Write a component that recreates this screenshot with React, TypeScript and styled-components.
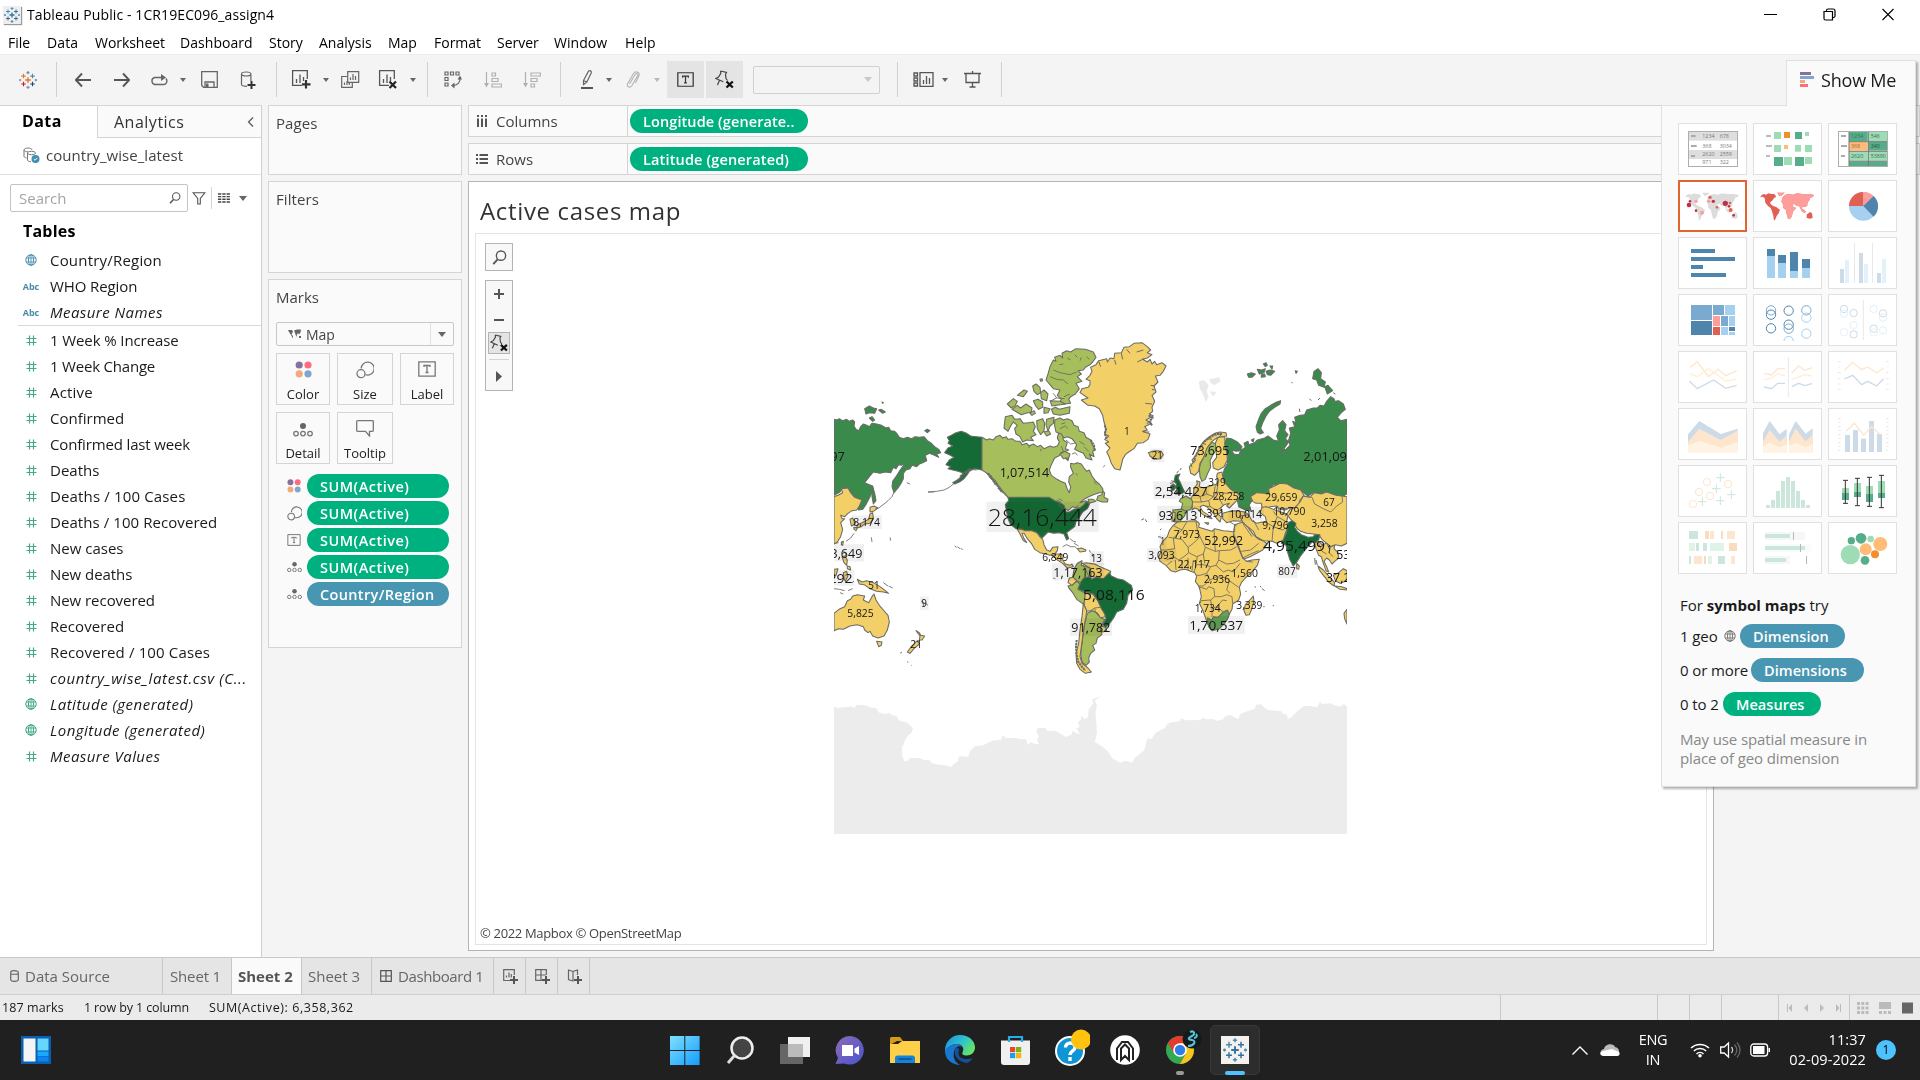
import React from "react";
import styled, { createGlobalStyle } from "styled-components";

const GlobalStyle = createGlobalStyle`
  * { box-sizing: border-box; }
  html, body { margin: 0; padding: 0; }
  body { width: 1920px; height: 1080px; overflow: hidden; background: #fff; }
  svg { display: block; flex: none; }
`;

const UI = `"Open Sans", "Noto Sans", sans-serif`;

const Screen = styled.div`
  position: relative;
  display: flex;
  flex-direction: column;
  width: 1920px;
  height: 1080px;
  background: #f4f4f4;
  font-family: ${UI};
  font-size: 15px;
  color: #1a1a1a;
  overflow: hidden;
  white-space: nowrap;
`;

/* ---------- title and menu ---------- */
const TitleBar = styled.header`
  display: flex;
  align-items: center;
  height: 29px;
  padding: 0 26px 0 3px;
  background: #fff;
`;
const AppBadge = styled.span`
  display: grid;
  place-items: center;
  width: 18px;
  height: 18px;
  background: #eee;
  box-shadow: 1px 1px 1px #999;
`;
const TitleText = styled.h1`
  flex: 1;
  margin: 0 0 0 6px;
  font-size: 14px;
  font-weight: 400;
  letter-spacing: 0.1px;
  color: #000;
`;
const WindowButtons = styled.div`
  display: flex;
  gap: 46px;
`;
const MenuBar = styled.nav`
  display: flex;
  align-items: center;
  height: 25px;
  padding-top: 1px;
  background: #fff;
  color: #000;
  font-size: 14px;
`;
const MenuItem = styled.span<{ $w: number; $s: number }>`
  width: ${(p) => p.$w}px;
  padding-left: 8px;
  letter-spacing: ${(p) => p.$s}px;
`;

/* ---------- toolbar ---------- */
const Toolbar = styled.div`
  display: flex;
  align-items: center;
  height: 51px;
  padding-bottom: 1px;
  border-top: 1px solid #ececec;
  background: #f4f4f4;
`;
const Tool = styled.span<{ $l: number; $w: number; $on?: boolean }>`
  display: flex;
  justify-content: center;
  align-items: center;
  margin-left: ${(p) => p.$l}px;
  width: ${(p) => p.$w}px;
  height: 37px;
  background: ${(p) => (p.$on ? "#e4e4e4" : "transparent")};
`;
const Divider = styled.span<{ $l: number }>`
  margin-left: ${(p) => p.$l}px;
  width: 1px;
  height: 35px;
  background: #d0d0d0;
`;
const Caret = styled.i<{ $c?: string; $l?: number; $size?: number }>`
  margin-left: ${(p) => p.$l ?? 0}px;
  border: ${(p) => p.$size ?? 3}px solid transparent;
  border-top: ${(p) => (p.$size ?? 3) + 1}px solid ${(p) => p.$c ?? "#666"};
  border-bottom: 0;
`;
const FitSelect = styled.span`
  display: flex;
  align-items: center;
  justify-content: flex-end;
  margin-left: 10px;
  padding-right: 7px;
  width: 127px;
  height: 28px;
  border: 1px solid #d0d0d0;
  border-radius: 2px;
`;

/* ---------- body ---------- */
const Body = styled.div`
  display: flex;
  height: 852px;
`;
const DataPane = styled.aside`
  width: 262px;
  border-top: 1px solid #d4d4d4;
  border-right: 1px solid #d0d0d0;
  background: #fff;
`;
const PaneTabs = styled.div`
  display: flex;
  height: 32px;
`;
const DataTab = styled.b`
  width: 97px;
  padding: 4px 0 0 22px;
  font-size: 16px;
  font-weight: 700;
  line-height: 22px;
  letter-spacing: 0.4px;
  color: #000;
`;
const AnalyticsTab = styled.span`
  display: flex;
  flex: 1;
  justify-content: space-between;
  align-items: center;
  padding: 1px 7px 0 16px;
  font-size: 16px;
  letter-spacing: 0.5px;
  border-left: 1px solid #d4d4d4;
  border-bottom: 1px solid #d4d4d4;
  background: #fafafa;
  color: #333;
`;
const SourceRow = styled.div`
  display: flex;
  align-items: center;
  gap: 6px;
  height: 37px;
  padding: 0 0 2px 23px;
  border-bottom: 1px solid #e0e0e0;
  color: #444;
  letter-spacing: 0.05px;
`;
const SearchRow = styled.div`
  display: flex;
  align-items: center;
  height: 46px;
  padding: 0 0 0 10px;
`;
const SearchBox = styled.div`
  display: flex;
  align-items: center;
  justify-content: space-between;
  width: 178px;
  height: 28px;
  margin-right: 4px;
  padding: 0 6px 1px 8px;
  border: 1px solid #c4c4c4;
  border-radius: 2px;
  color: #a5a5a5;
`;
const ThinLine = styled.span`
  width: 1px;
  height: 22px;
  margin: 0 6px 0 5px;
  background: #d4d4d4;
`;
const Tables = styled.h2`
  margin: 0;
  padding: 0 0 0 23px;
  height: 26px;
  font-size: 16px;
  line-height: 20px;
  font-weight: 700;
  letter-spacing: 0.2px;
  color: #000;
`;
const Field = styled.div<{ $i?: boolean; $s?: number }>`
  display: flex;
  align-items: center;
  height: 26px;
  font-style: ${(p) => (p.$i ? "italic" : "normal")};
  letter-spacing: ${(p) => p.$s ?? 0}px;
`;
const FieldIcon = styled.span`
  display: flex;
  justify-content: center;
  width: 26px;
  margin: 0 6px 0 18px;
  font: 700 9px ${UI};
  letter-spacing: 0;
  color: #4a89a8;
`;
const FieldRule = styled.hr`
  height: 1px;
  margin: 0 0 1px 18px;
  border: 0;
  background: #d9d9d9;
`;

const Cards = styled.section`
  display: flex;
  flex-direction: column;
  gap: 6px;
  width: 206px;
  padding: 0 6px;
`;
const Card = styled.div<{ $h: number }>`
  height: ${(p) => p.$h}px;
  padding: 6px 7px;
  border: 1px solid #d4d4d4;
  background: #fafafa;
  color: #444;
`;
const CardTitle = styled.div<{ $s?: number }>`
  height: 23px;
  line-height: 22px;
  letter-spacing: ${(p) => p.$s ?? 0}px;
`;
const MarkSelect = styled.div`
  display: flex;
  align-items: center;
  width: 178px;
  height: 24px;
  margin: 13px 0 7px;
  padding-left: 11px;
  border: 1px solid #c8c8c8;
  border-radius: 2px;
  font-size: 14px;
  gap: 5px;
`;
const MarkArrow = styled.span`
  display: grid;
  place-items: center;
  width: 23px;
  height: 22px;
  margin-left: auto;
  border-left: 1px solid #e0e0e0;
`;
const MarkGrid = styled.div`
  display: grid;
  grid-template-columns: 54px 56px 54px;
  grid-auto-rows: 52px;
  gap: 7px;
  margin-bottom: 10px;
`;
const MarkButton = styled.div`
  display: flex;
  flex-direction: column;
  align-items: center;
  justify-content: space-between;
  padding: 7px 0 0;
  border: 1px solid #d4d4d4;
  font-size: 13px;
  line-height: 20px;
  color: #222;
`;
const PillRow = styled.div`
  display: flex;
  align-items: center;
  height: 24px;
  margin-bottom: 3px;
`;
const PillIcon = styled.span`
  display: flex;
  justify-content: center;
  width: 18px;
  margin: 0 4px 0 9px;
`;
const Pill = styled.span<{ $w: number; $blue?: boolean; $s?: number; $l?: number }>`
  width: ${(p) => p.$w}px;
  height: 24px;
  padding-left: ${(p) => p.$l ?? 13}px;
  border-radius: 12px;
  background: ${(p) => (p.$blue ? "#4996b2" : "#00b180")};
  color: #fff;
  font-weight: 600;
  font-size: 14.5px;
  line-height: 25px;
  letter-spacing: ${(p) => p.$s ?? 0}px;
`;

const Work = styled.main`
  flex: 1;
  display: flex;
  flex-direction: column;
`;
const Shelf = styled.div`
  display: flex;
  height: 32px;
  margin-bottom: 6px;
  border: 1px solid #d4d4d4;
  background: #fafafa;
  align-items: center;
`;
const ShelfName = styled.div`
  display: flex;
  align-items: center;
  gap: 8px;
  width: 159px;
  height: 30px;
  margin-right: 2px;
  padding-left: 7px;
  border-right: 1px solid #d4d4d4;
  color: #444;
`;
const Sheet = styled.div`
  width: 1246px;
  height: 770px;
  padding: 0 6px;
  border: 1px solid #b4b4b4;
  background: #fff;
`;
const SheetTitle = styled.h2`
  height: 51px;
  margin: 0;
  padding: 5px 0 0 5px;
  font-size: 24px;
  line-height: 48px;
  font-weight: 400;
  letter-spacing: 0.65px;
  color: #333;
`;
const Viz = styled.div`
  display: flex;
  flex-direction: column;
  position: relative;
  height: 712px;
  padding: 9px 9px 4px;
  border: 1px solid #e4e4e4;
`;
const MapControl = styled.div<{ $h: number }>`
  display: flex;
  flex-direction: column;
  align-items: center;
  width: 28px;
  height: ${(p) => p.$h}px;
  margin-bottom: 9px;
  border: 1px solid #b4b4b4;
  background: #f8f8f8;
`;
const MapCell = styled.span<{ $h: number; $on?: boolean }>`
  display: grid;
  place-items: center;
  width: 22px;
  height: ${(p) => p.$h}px;
  border: ${(p) => (p.$on ? "1px solid #b4b4b4" : "0")};
  background: ${(p) => (p.$on ? "#e4e4e4" : "transparent")};
`;
const ControlRule = styled.span`
  width: 20px;
  height: 1px;
  margin: 5px 0 5px;
  background: #d4d4d4;
`;
const MapCanvas = styled.div`
  position: absolute;
  left: 358px;
  top: 96px;
`;
const Credit = styled.div`
  margin-top: auto;
  margin-left: -5px;
  font-size: 13px;
  line-height: 14px;
  letter-spacing: -0.33px;
  color: #444;
`;

/* ---------- sheet tabs, status ---------- */
const SheetTabs = styled.div`
  display: flex;
  height: 37px;
  border-top: 1px solid #c8c8c8;
  background: #e5e5e5;
  color: #666;
`;
const SheetTab = styled.div<{ $w: number; $active?: boolean; $p?: number; $s?: number }>`
  display: flex;
  align-items: center;
  gap: 6px;
  width: ${(p) => p.$w}px;
  padding-left: ${(p) => p.$p ?? 7}px;
  border-right: 1px solid #c8c8c8;
  background: ${(p) => (p.$active ? "#fafafa" : "transparent")};
  font-weight: ${(p) => (p.$active ? 700 : 400)};
  color: ${(p) => (p.$active ? "#555" : "#666")};
  letter-spacing: ${(p) => p.$s ?? 0}px;
`;
const StatusBar = styled.div`
  display: flex;
  align-items: center;
  height: 26px;
  padding-left: 2px;
  border-top: 1px solid #cfcfcf;
  background: #ebebeb;
  font-size: 12.5px;
`;
const StatusText = styled.span<{ $w: number; $s?: number }>`
  width: ${(p) => p.$w}px;
  letter-spacing: ${(p) => p.$s ?? 0}px;
`;
const StatusCell = styled.span<{ $w: number }>`
  display: flex;
  align-items: center;
  justify-content: center;
  width: ${(p) => p.$w}px;
  height: 25px;
  border-left: 1px solid #c8c8c8;
`;

/* ---------- task bar ---------- */
const TaskBar = styled.footer`
  display: flex;
  align-items: center;
  height: 60px;
  padding-left: 21px;
  background: #202020;
  color: #fff;
`;
const Dock = styled.div`
  display: flex;
  margin-left: 609px;
`;
const DockSlot = styled.div<{ $on?: boolean }>`
  display: grid;
  place-items: center;
  position: relative;
  width: 50px;
  height: 50px;
  margin-right: 5px;
  border-radius: 5px;
  border: 1px solid ${(p) => (p.$on ? "#383838" : "transparent")};
  background: ${(p) => (p.$on ? "#2d2d2d" : "transparent")};
`;
const Badged = styled.span<{ $m: string }>`
  margin: ${(p) => p.$m};
`;
const RunMark = styled.i<{ $w: number; $c: string }>`
  position: absolute;
  bottom: -1px;
  width: ${(p) => p.$w}px;
  height: 4px;
  border-radius: 2px;
  background: ${(p) => p.$c};
`;
const Tray = styled.div`
  display: flex;
  align-items: center;
  flex: 1;
  justify-content: flex-end;
  padding-right: 24px;
  font-size: 14.5px;
  line-height: 20px;
`;
const TwoLines = styled.div<{ $a: string; $w: number; $m: string; $s: number }>`
  width: ${(p) => p.$w}px;
  margin: ${(p) => p.$m};
  text-align: ${(p) => p.$a};
  letter-spacing: ${(p) => p.$s}px;
`;
const Bubble = styled.span`
  width: 20px;
  height: 20px;
  border-radius: 10px;
  background: #4cc2ff;
  color: #000;
  font-size: 12px;
  text-align: center;
`;

/* ---------- show me ---------- */
const ShowMe = styled.aside`
  position: absolute;
  left: 1661px;
  top: 60px;
  width: 255px;
  height: 727px;
  display: flex;
  flex-direction: column;
  align-items: flex-end;
  filter: drop-shadow(2px 2px 1px rgba(0, 0, 0, 0.3));
`;
const ShowTab = styled.div`
  display: flex;
  align-items: center;
  gap: 6px;
  width: 130px;
  height: 46px;
  margin-bottom: -1px;
  padding: 0 0 8px 13px;
  border: 1px solid #e0e0e0;
  border-bottom: 0;
  background: #fafafa;
  z-index: 1;
  font-size: 18px;
  letter-spacing: -0.2px;
`;
const ShowPanel = styled.div`
  width: 255px;
  height: 682px;
  padding: 17px 16px;
  border: 1px solid #e0e0e0;
  background: #fafafa;
`;
const Thumbs = styled.div`
  display: grid;
  grid-template-columns: repeat(3, 69px);
  grid-auto-rows: 52px;
  gap: 5px 6px;
`;
const Thumb = styled.div<{ $on?: boolean }>`
  background: #fff;
  outline: ${(p) => (p.$on ? "2px solid #e0662e" : "1px solid #e0e0e0")};
  outline-offset: ${(p) => (p.$on ? -2 : -1)}px;
`;
const Hint = styled.div<{ $t: number }>`
  display: flex;
  align-items: center;
  height: 24px;
  margin: ${(p) => p.$t}px 0 0 2px;
  gap: 4px;
`;
const HintLead = styled.span<{ $w: number }>`
  width: ${(p) => p.$w}px;
  letter-spacing: -0.1px;
`;
const HintNote = styled.p`
  margin: 14px 0 0 2px;
  line-height: 19px;
  color: #888;
  letter-spacing: -0.12px;
`;

/* ---------- icons ---------- */
type G = { c?: string; s?: number };
const Svg = ({ w, h, children, box }: { w: number; h: number; box?: string; children: React.ReactNode }) => (
  <svg width={w} height={h} viewBox={box ?? `0 0 ${w} ${h}`} fill="none">
    {children}
  </svg>
);
const plus = (x: number, y: number, r: number) => `M${x - r} ${y}h${2 * r}M${x} ${y - r}v${2 * r}`;
const TableauMark = ({ s, mono }: { s: number; mono?: boolean }) => (
  <Svg w={s} h={s} box="0 0 32 32">
    <g strokeWidth={2}>
      <path stroke={mono ? "#35729e" : "#e8762c"} strokeWidth={2.6} d={plus(16, 16, 5)} />
      <path stroke={mono ? "#35729e" : "#c72037"} d={plus(8, 23, 4)} />
      <path stroke={mono ? "#4b8cb5" : "#e8762c"} d={plus(8, 9, 4)} />
      <path stroke={mono ? "#35729e" : "#5b879b"} d={plus(24, 9, 4)} />
      <path stroke={mono ? "#35729e" : "#1f447e"} d={plus(24, 23, 4)} />
      <path stroke={mono ? "#4b8cb5" : "#59879b"} d={plus(16, 3, 2.8) + plus(30, 16, 2)} />
      <path stroke={mono ? "#4b8cb5" : "#7099a6"} d={plus(16, 29, 2.8) + plus(2, 16, 2)} />
    </g>
  </Svg>
);
const Arrow = ({ flip }: { flip?: boolean }) => (
  <Svg w={16} h={16}>
    <path d={flip ? "M0 8h15M9 1.5L15.2 8 9 14.5" : "M16 8H1M7 1.5L.8 8 7 14.5"} stroke="#555" strokeWidth={1.9} />
  </Svg>
);
const LoopIcon = () => (
  <Svg w={18} h={14}>
    <path d="M4 11.500h9.500a3.500 3.500 0 0 0 3.400-3.600 3.500 3.500 0 0 0-1-2.400M5 11.500A3.600 3.600 0 0 1 4.500 4.500H12" stroke="#666" strokeWidth={1.4} />
    <path d="M11 1l5 3.500-5 3.500z" fill="#666" />
  </Svg>
);
const SaveIcon = () => (
  <Svg w={17} h={17}>
    <path d="M.7.7h15.600v15.600H2.500L.700 14.500zM4 16v-5h9v5" stroke="#666" strokeWidth={1.3} />
    <path d="M5 12.500h2.500V16H5z" fill="#666" />
  </Svg>
);
const DataPlus = () => (
  <Svg w={16} h={18}>
    <path d="M7 15.300C3 15.300 1.500 14.500 1.500 13.500V3c0-1.200 2-2 4.700-2s4.700.800 4.700 2v7M1.500 3c0 1.200 2 2 4.700 2s4.700-.800 4.700-2" stroke="#666" strokeWidth={1.2} />
    <path d="M11.500 10v8M7.500 14h8" stroke="#333" strokeWidth={2} />
  </Svg>
);
const ChartIcon = ({ x }: { x?: boolean }) => (
  <Svg w={20} h={19}>
    <path d="M11 15.400H1.600V.700h14.700V9M5.500 13V9M9 13V4.500M12.500 11V7" stroke="#555" strokeWidth={1.3} />
    {x ? <path d="M11.500 11.500l6.500 6.500M18 11.500L11.500 18" stroke="#222" strokeWidth={2.200} /> : <path d="M15 10v8.500M11 14.300h8.500" stroke="#333" strokeWidth={2.200} />}
  </Svg>
);
const CopyIcon = () => (
  <Svg w={19} h={17}>
    <path d="M6.700.700h11v10.600h-11zM6 5.500H.700v10.800h10.600V12M9.500 9V6.500M12 9V3M14.500 9V5M3.500 14v-2.500M6 14v-4M8.300 14v-2" stroke="#666" strokeWidth={1.200} />
  </Svg>
);
const SwapIcon = () => (
  <Svg w={18} h={18}>
    <path d="M1 1h3v3H1zM6.500 1h3v3h-3zM12 1h3v3h-3zM1 6.500h3v3H1zM1 12h3v3H1zM16 6.500c.500 5-2.500 8-7.500 8" stroke="#666" strokeWidth={1.200} />
    <path d="M13.500 8.500L16 4.500l2 4zM10.500 11.500L7 14.500l3.500 3z" fill="#666" />
  </Svg>
);
const SortIcon = ({ desc }: { desc?: boolean }) => (
  <Svg w={18} h={16}>
    <path d={`M2.500 0v12M${desc ? "8 1h9.500v3H8zM8 6.500h6v3H8zM8 12h3.500v3H8z" : "8 1h3.500v3H8zM8 6.500h6v3H8zM8 12h9.500v3H8z"}`} stroke="#b0b0b0" strokeWidth={1.200} />
    <path d="M0 11h5l-2.500 4.500z" fill="#b0b0b0" />
  </Svg>
);
const PenIcon = () => (
  <Svg w={14} h={20}>
    <path d="M3.500 10.500L8.500 1.200c1-1.200 3.300-.2 2.800 1.500L6.800 12l-3.300 2.500zM3.500 10.500L6.800 12" stroke="#666" strokeWidth={1.200} />
    <path d="M1 17h12v2H1z" fill="#555" />
  </Svg>
);
const ClipIcon = () => (
  <Svg w={14} h={18}>
    <path d="M3.500 13L9 3.500c1.200-1.700 3.300-.5 2.600 1.200L6 14.500c-2 3-5.500 1.200-4.500-1.500L7.500 2.500C9.500-.5 14 1 13 4.500L9.500 12" stroke="#b8b8b8" strokeWidth={1.200} />
  </Svg>
);
const LabelIcon = ({ w = 18, h = 16, c = "#777" }: { w?: number; h?: number; c?: string }) => (
  <Svg w={w} h={h} box="0 0 18 16">
    <path d="M.800.800h16.400v14.400H.800zM6 6V4.500h6V6M9 4.500v7M7.500 11.500h3" stroke={c} strokeWidth={1.300} />
  </Svg>
);
const PinIcon = ({ s = 19 }: G) => (
  <Svg w={s} h={s} box="0 0 19 19">
    <path d="M5.500 1l6 1.500-1 1.800.5 4.200 1.500 2M5.500 1l.3 2.300L3.500 7 .800 8.500l7.500 3.300M4.500 10.300L2.500 15" stroke="#444" strokeWidth={1.200} />
    <path d="M11.500 11.500l6.300 6M17.800 11.500l-6.300 6" stroke="#111" strokeWidth={2.300} />
  </Svg>
);
const LensIcon = ({ s = 12, c = "#555" }: G) => (
  <Svg w={s} h={s} box="0 0 12 12">
    <circle cx={7.200} cy={4.500} r={3.700} stroke={c} strokeWidth={1.100} />
    <path d="M4.500 7.500L1 11.300" stroke={c} strokeWidth={1.500} />
  </Svg>
);
const GlobeIcon = ({ c = "#4a8fb0" }: G) => (
  <Svg w={12} h={12}>
    <circle cx={6} cy={6} r={5.200} stroke={c} />
    <ellipse cx={6} cy={6} rx={2.500} ry={5.200} stroke={c} />
    <path d="M1 4h10M1 8h10M6 .8v10.400" stroke={c} strokeWidth={0.9} />
  </Svg>
);
const HashIcon = () => (
  <Svg w={11} h={11}>
    <path d="M3.500 .5v10M7.500 .5v10M.500 3.500h10M.500 7.500h10" stroke="#45a886" strokeWidth={1.150} />
  </Svg>
);
const DotsIcon = ({ s = 17 }: G) => (
  <Svg w={s} h={s} box="0 0 17 17">
    <circle cx={4.200} cy={4} r={3.600} fill="#86709c" />
    <circle cx={13} cy={4} r={3.600} fill="#fa6e80" />
    <circle cx={4.200} cy={12.800} r={3.600} fill="#f5a878" />
    <circle cx={13} cy={12.800} r={3.600} fill="#7fa6cc" />
  </Svg>
);
const SizeIcon = ({ s = 18 }: G) => (
  <Svg w={s} h={s} box="0 0 18 18">
    <path d="M5.200 7.500a6.500 6.500 0 1 1 4.300 6.200" stroke="#777" strokeWidth={1.300} />
    <circle cx={5} cy={12.700} r={4} stroke="#777" strokeWidth={1.300} />
  </Svg>
);
const DetailIcon = ({ s = 20 }: G) => (
  <Svg w={s} h={(s * 14) / 20} box="0 0 20 14">
    <circle cx={10} cy={3} r={3} fill="#666" />
    <g stroke="#777" strokeWidth={1.300}>
      <circle cx={3} cy={10.600} r={2.300} />
      <circle cx={10} cy={10.600} r={2.300} />
      <circle cx={17} cy={10.600} r={2.300} />
    </g>
  </Svg>
);
const TooltipIcon = () => (
  <Svg w={18} h={17}>
    <path d="M1.500.700h15c.500 0 .800.300.800.800v9c0 .500-.300.800-.800.800h-3V16l-4-4.700h-8c-.500 0-.800-.300-.800-.800v-9c0-.500.300-.800.800-.800z" stroke="#777" strokeWidth={1.300} />
  </Svg>
);

const WORLD_MINI =
  "M0 6l6-2 6 2 8-4 8 2 8 0 4 3 2 6-6 3-4 7-4 3-4 4 2 4 4 4 4 2 10 4 10 8-4 10-6 8-4 10-4 4-2-14-4-14-4-10-8-6-8-10-2-14-6-4-8 2zM46 0l22 0-8 8-8 2zM62 14l8-8 12-2 10 2 14-4 14 2 20 0 16 3-4 6-8 2-2 8-6 8 0 8-8 4-6-2-4 12-6-12-8-2-8-6-6 4-8-6-8 4-10-2-6-6zM62 32l14-3 12 3 6 10 8 4-10 12-2 12-6 8-6 0-4-14-2-12-8-6zM134 66l10-8 6 4 2 14-8 2-10-2zM116 46l8 4 8 8-6 2-8-6z";
const WORLD_EAST =
  "M62 14l8-8 12-2 10 2 14-4 14 2 20 0 16 3-4 6-8 2-2 8-6 8 0 8-8 4-6-2-4 12-6-12-8-2-8-6-6 4-8-6-8 4-10-2-6-6zM62 32l14-3 12 3 6 10 8 4-10 12-2 12-6 8-6 0-4-14-2-12-8-6zM116 46l8 4 8 8-6 2-8-6zM46 0l22 0-8 8-8 2z";

/* ---------- chart thumbnails, drawn on a 207 x 156 grid ---------- */
const B = "#4f84ad", L = "#a5d0f0", GR = "#56ad8a", LG = "#9ddcb5", OR = "#ffbc79", DO = "#f28e2c";
const FB = "#cddbe8", FL = "#e3f1fb", FO = "#fde6cd", FY = "#fff4e3", FG = "#cbe6db";
type Box = [number, number, number, number, string];
const Boxes = ({ d }: { d: Box[] }) => (
  <>{d.map(([x, y, w, h, f], i) => <rect key={i} x={x} y={y} width={w} height={h} fill={f} />)}</>
);
type Ring = [number, number, number, string];
const Rings = ({ d, fill }: { d: Ring[]; fill?: boolean }) => (
  <>
    {d.map(([x, y, r, c], i) => (
      <circle key={i} cx={x} cy={y} r={r} fill={fill ? c : "none"} stroke={fill ? "none" : c} strokeWidth={3} />
    ))}
  </>
);
const Num = ({ x, y, t, c = "#777" }: { x: number; y: number; t: string; c?: string }) => (
  <text x={x} y={y} fill={c} fontSize={16} fontFamily="Open Sans">{t}</text>
);

const thumbs: React.ReactNode[] = [
  <>
    <Boxes d={[[31, 25, 148, 28, "#dedede"], [31, 81, 148, 27, "#dedede"], [39, 36, 14, 6, "#aaa"], [39, 66, 17, 6, "#aaa"], [39, 96, 12, 6, "#aaa"]]} />
    <rect x={31.5} y={25.5} width={147} height={105} fill="none" stroke="#aeaeae" strokeWidth={3} />
    <Num x={73} y={46} t="1234" /><Num x={125} y={46} t="678" /><Num x={73} y={74} t="368" /><Num x={125} y={74} t="3034" />
    <Num x={73} y={100} t="2620" /><Num x={125} y={100} t="2559" /><Num x={73} y={124} t="971" /><Num x={125} y={124} t="322" />
  </>,
  <Boxes d={[[39, 36, 15, 6, "#bbb"], [39, 66, 18, 6, "#bbb"], [39, 96, 12, 6, "#bbb"], [63, 27, 21, 21, LG], [93, 27, 18, 18, DO], [126, 27, 21, 21, GR], [156, 27, 12, 12, LG], [63, 66, 21, 21, LG], [93, 66, 12, 12, OR], [126, 66, 18, 20, LG], [156, 66, 21, 21, LG], [63, 102, 27, 27, GR], [93, 102, 24, 24, LG], [126, 102, 27, 27, GR], [156, 102, 21, 21, LG]]} />,
  <>
    <Boxes d={[[63, 25, 56, 30, GR], [121, 25, 56, 30, LG], [63, 57, 56, 26, OR], [121, 57, 56, 26, GR], [63, 86, 56, 28, LG], [121, 86, 56, 28, LG], [63, 117, 114, 13, GR], [39, 36, 15, 6, "#aaa"], [39, 66, 18, 6, "#aaa"], [39, 96, 12, 6, "#aaa"]]} />
    <path d="M63 25v105M121 25v105M63 56h115M63 85h115M63 115h115" stroke="#777" strokeWidth={3} />
    <rect x={31.5} y={25.5} width={147} height={105} fill="none" stroke="#aeaeae" strokeWidth={3} />
    <Num x={69} y={45} t="1234" c="#375" /><Num x={128} y={45} t="546" c="#465" /><Num x={69} y={76} t="368" c="#964" /><Num x={128} y={76} t="340" c="#253" />
    <Num x={69} y={106} t="2620" c="#465" /><Num x={128} y={106} t="53890" c="#465" />
  </>,
  <>
    <path transform="translate(27 38)" d={WORLD_MINI} fill="#dcdcdc" />
    <Rings fill d={[[33, 75, 7, "#c22e44"], [36, 64, 4, "#c22e44"], [54, 64, 5, "#ff9d9a"], [54, 92, 4, "#c22e44"], [72, 98, 6, "#ff9d9a"], [92, 64, 5, "#ff9d9a"], [96, 52, 5, "#e15f53"], [106, 64, 5, "#c22e44"], [117, 82, 4, "#e15f53"], [142, 70, 8, "#c22e44"], [156, 69, 4, "#e15f53"], [153, 79, 4, "#c22e44"], [158, 90, 6, "#e15f53"], [167, 106, 4, "#c22e44"]]} />
  </>,
  <>
    <path transform="translate(27 38)" d={WORLD_MINI} fill="#e15f53" />
    <path transform="translate(27 38)" d={WORLD_EAST} fill="#ff9d9a" />
  </>,
  <>
    <circle cx={106} cy={79} r={43} fill={L} />
    <path d="M106 78V36a43 43 0 0 0-43 42z" fill="#e15f53" />
    <path d="M106 78V36a43 43 0 0 1 31 13z" fill="#ff9d9a" />
    <path d="M106 78l31-30a43 43 0 0 1 0 62z" fill={B} />
  </>,
  <Boxes d={[[39, 36, 72, 12, B], [39, 60, 132, 12, B], [39, 84, 36, 12, B], [39, 108, 105, 12, B]]} />,
  <Boxes d={[[42, 36, 24, 21, B], [42, 57, 24, 66, L], [75, 54, 24, 24, B], [75, 78, 24, 45, L], [111, 45, 24, 57, B], [111, 102, 24, 21, L], [147, 66, 24, 27, B], [147, 93, 24, 30, L]]} />,
  <Boxes d={[[36, 96, 12, 42, FB], [51, 69, 12, 69, FL], [78, 18, 3, 120, "#e8e8e8"], [93, 48, 12, 90, FB], [108, 81, 12, 57, FL], [132, 18, 3, 120, "#e8e8e8"], [147, 108, 12, 30, FB], [162, 66, 12, 72, FL]]} />,
  <Boxes d={[[39, 33, 63, 45, "#7baad0"], [39, 81, 63, 42, B], [105, 33, 33, 30, "#7baad0"], [141, 33, 30, 30, L], [105, 66, 21, 30, "#ff9d9a"], [129, 66, 21, 30, "#7baad0"], [153, 66, 18, 30, L], [105, 99, 21, 24, "#e15f53"], [129, 99, 21, 24, L], [153, 99, 18, 12, B], [153, 114, 18, 9, L]]} />,
  <>
    <Rings d={[[54, 49, 14, "#7baad0"], [54, 62, 14, B], [54, 103, 14, B], [107, 50, 14, B], [107, 92, 14, B], [107, 104, 14, "#7baad0"], [160, 49, 14, "#7baad0"], [160, 71, 14, L], [160, 119, 14, L]]} />
    <path d="M93 141a14 14 0 0 1 28 0" stroke={L} strokeWidth={3} />
  </>,
  <>
    <Rings d={[[48, 45, 11, FB], [48, 59, 11, FL], [48, 115, 11, FL], [77, 57, 11, FB], [77, 93, 11, FL], [77, 121, 11, FB], [137, 45, 11, FL], [165, 58, 11, FB], [165, 71, 11, FL], [137, 104, 11, FB], [137, 115, 11, FL], [165, 109, 11, FL]]} />
    <path d="M106 18v120" stroke="#e8e8e8" strokeWidth={3} />
  </>,
  <g strokeWidth={4}>
    <path d="M36 49l22-17 33 45 30-22 22 19 33-15" stroke={FO} />
    <path d="M36 68l22 9 33-24 52 37 33-5" stroke="#fff0d4" />
    <path d="M34 91l24 22 49-26 36 25 33-9" stroke={FB} />
  </g>,
  <g strokeWidth={4}>
    <path d="M33 67l22 5 19-19 22 0M116 66l21-21 18 13 22-8" stroke={FO} />
    <path d="M33 86l22-4 19-14 22 7M116 85l21-7 18-7 22 4" stroke="#fff0d4" />
    <path d="M33 108l22 5 19-16 22 0M116 107l21-10 18 7 22-6" stroke={FB} />
    <path d="M106 18v120" stroke="#e8e8e8" strokeWidth={3} />
  </g>,
  <g strokeWidth={4}>
    <path d="M49 58l25-24 27 22 18-8 27 18 21-16" stroke={FO} />
    <path d="M49 84l25-11 27 28 18-10 27 14 21-22" stroke={FB} />
    <path d="M34 30v102M178 30v102" stroke="#e2e2e2" strokeWidth={8} strokeDasharray="2 15" />
  </g>,
  <>
    <path d="M30 79L64 39l64 39 51-16v68H30z" fill={FB} /><path d="M30 102l34-40 64 34 51-28v62H30z" fill={FO} /><path d="M30 112l34-14 66 22 49-18v33H30z" fill={FY} />
  </>,
  <>
    <path d="M30 75l20-36 30 40 21-17v70H30zM108 79l20-40 30 38 21-16v70h-71z" fill={FB} />
    <path d="M30 101l20-36 30 36 21-20v54H30zM108 100l20-38 30 38 21-20v54h-71z" fill={FO} />
    <path d="M30 114l20-10 30 14 21-10v27H30zM108 114l20-10 30 14 21-10v27h-71z" fill={FY} />
  </>,
  <>
    <Boxes d={[[51, 81, 15, 51, FB], [75, 66, 15, 66, FB], [99, 92, 15, 40, FB], [123, 39, 15, 93, FB], [147, 78, 15, 54, FB]]} />
    <path d="M55 69l24-23 28 35 24-25 27 25" stroke={FO} strokeWidth={4} />
    <path d="M34 30v102M178 30v102" stroke="#e2e2e2" strokeWidth={8} strokeDasharray="2 10" />
  </>,
  <>
    <Rings d={[[87, 51, 11, FO], [63, 81, 11, FO], [96, 93, 11, FO], [45, 117, 11, FO], [150, 57, 11, FO]]} />
    <path d={plus(127, 38, 13) + plus(115, 71, 13) + plus(160, 89, 13) + plus(73, 110, 13) + plus(127, 107, 13)} stroke={FG} strokeWidth={3} />
  </>,
  <Boxes d={[[39, 120, 12, 9, FG], [54, 105, 12, 24, FG], [69, 78, 12, 51, FG], [84, 48, 12, 81, FG], [99, 36, 12, 93, FG], [114, 48, 12, 81, FG], [129, 78, 12, 51, FG], [144, 105, 12, 24, FG], [159, 120, 12, 9, FG]]} />,
  <>
    <Boxes d={[[42, 69, 21, 15, LG], [42, 84, 21, 21, GR], [78, 54, 21, 27, LG], [78, 81, 21, 15, GR], [114, 63, 21, 24, LG], [114, 87, 21, 24, GR], [150, 48, 21, 36, LG], [150, 84, 21, 15, GR]]} />
    <path d="M52 46v70M88 40v82M124 37v87M160 31v97M45 46h15M45 115h15M81 40h15M81 122h15M117 37h15M117 124h15M153 31h15M153 128h15" stroke="#333" strokeWidth={3} />
  </>,
  <Boxes d={[[33, 27, 27, 24, FG], [81, 27, 12, 24, "#f9dcc0"], [96, 27, 12, 24, FO], [129, 27, 6, 24, "#f9dcc0"], [147, 27, 24, 24, FO], [33, 63, 18, 24, "#e0f3e8"], [54, 63, 9, 24, FG], [75, 63, 12, 24, FG], [96, 63, 42, 24, "#e0f3e8"], [153, 63, 24, 24, "#f9dcc0"], [33, 102, 6, 24, FG], [48, 102, 24, 24, FO], [78, 102, 6, 24, "#f9dcc0"], [90, 102, 12, 24, "#e0f3e8"], [120, 102, 21, 24, FG], [159, 102, 12, 24, FO]]} />,
  <Boxes d={[[36, 30, 120, 24, "#f7f7f7"], [36, 66, 138, 24, "#f9fbfa"], [36, 102, 75, 24, "#f7f7f7"], [36, 36, 75, 12, FG], [36, 72, 120, 12, FG], [36, 108, 63, 12, FG], [120, 30, 3, 24, "#b8b8b8"], [141, 66, 3, 24, "#b8b8b8"], [159, 102, 3, 24, "#b8b8b8"]]} />,
  <Rings fill d={[[67, 98, 29, LG], [70, 56, 11, GR], [99, 49, 16, GR], [128, 51, 10, LG], [157, 66, 21, OR], [113, 82, 18, OR], [141, 97, 12, DO], [111, 115, 13, GR]]} />,
];

/* ---------- world map ---------- */
const Y = "#f3d067", C1 = "#a6bf5c", C2 = "#62a355", C3 = "#3a8a4c", C4 = "#146b35";
const west: [string, string][] = [
  [C3, "M42 268L50 270 58 266 68 272 80 268 88 274 98 270 104 276 102 288 108 298 116 302 122 290 130 282 140 286 148 290 156 280 170 282 185 286 198 294 206 292 212 302 224 304 230 310 238 322 250 326 262 322 275 326 285 320 298 322 312 320 322 332 332 338 344 350 356 358 362 368 350 372 356 382 340 374 328 370 316 376 320 392 308 398 298 402 290 410 276 406 270 416 258 420 250 430 250 446 242 462 234 474 222 488 216 470 218 454 228 440 238 424 248 410 254 400 244 406 236 404 228 416 220 412 212 428 196 426 180 430 160 426 148 440 134 458 148 464 158 468 160 480 150 500 140 520 128 538 116 540 112 530 122 520 126 510 110 506 100 500 92 488 84 474 70 472 60 486 42 496Z"],
  [C3, "M134 236L148 228 160 234 170 236 164 250 148 248 138 252ZM176 240L184 238 196 246 188 250ZM148 264L156 260 164 270 158 274ZM314 302L322 298 330 302 322 308ZM186 216l4 2-2 2zM158 470L164 490 168 512 160 522 156 500Z"],
  [Y, "M42 500L54 496 68 488 64 476 84 474 92 488 104 502 126 510 118 528 110 540 96 542 84 550 74 560 62 556 66 566 74 566 62 578 68 598 62 620 52 636 42 642Z"],
  [Y, "M150 532L162 528 174 534 160 544 150 546ZM158 548L160 566 150 580 134 582 124 590 110 594 112 584 126 578 146 568 150 552ZM90 568l8-4 8 18-12 6zM102 592l10 2-4 8-6-4zM64 636l6-2-2 12-4-2z"],
  [C4, "M486 322L470 320 452 318 440 310 424 304 408 308 394 316 382 322 388 332 384 340 398 348 384 354 374 368 388 374 402 382 388 390 378 404 392 410 384 416 398 420 414 424 428 428 424 440 412 450 398 458 404 462 418 456 430 448 440 436 448 424 462 416 474 418 486 420Z"],
  [C1, "M486 322L500 330 508 326 520 330 528 320 540 316 548 324 558 320 564 328 576 326 588 334 600 334 606 344 620 340 628 348 640 342 652 350 662 346 672 356 690 348 700 352 712 348 718 336 712 324 716 308 728 312 730 330 742 338 736 356 746 360 728 368 716 378 704 384 694 404 688 420 694 436 708 446 722 454 736 460 742 478 748 488 752 470 746 456 748 440 760 430 752 412 752 400 762 402 772 398 784 402 792 414 800 424 808 420 816 438 826 452 838 462 848 476 850 488 838 488 820 494 806 500 792 508 780 518 796 512 810 518 800 532 790 540 780 534 770 534 758 530 744 542 732 532 722 520 706 514 688 504 564 502 552 490 540 472 524 456 510 440 498 428 486 420Z"],
  [C1, "M834 498L846 494 848 484 854 488 852 502 864 508 862 516 846 516 830 510ZM804 508l16 0 8 6-20 6z"],
  [C1, "M690 110L700 90 708 94 704 82 720 76 728 84 726 70 740 62 752 66 768 56 796 58 820 66 828 82 818 96 810 104 798 110 790 120 774 122 784 132 772 140 786 154 768 160 778 176 766 192 752 200 746 208 752 220 735 222 715 222 724 208 712 196 720 180 700 176 690 164 678 150 684 132Z"],
  [C1, "M704 270L720 264 730 270 742 266 756 272 762 286 774 290 778 304 792 308 798 322 812 330 818 346 826 360 818 364 822 380 808 372 816 390 798 384 790 370 776 364 764 358 770 344 756 326 742 320 732 324 724 312 708 306 704 288Z"],
  [C1, "M556 260L576 256 584 268 600 266 610 280 626 278 640 276 646 290 640 304 648 314 632 322 640 332 620 330 608 336 600 320 588 312 584 296 592 286 580 276 572 288 564 304 552 294Z"],
  [C1, "M562 222L580 206 592 214 586 226 574 234ZM592 196L612 180 622 184 610 200 602 198ZM576 238L592 226 602 234 618 222 636 234 634 246 618 250 604 254 590 246ZM638 168L648 162 660 172 662 188 652 194 642 184ZM662 188L672 180 684 192 680 212 664 206ZM640 212L654 208 668 216 668 232 656 238 646 226ZM672 232L690 236 684 248 672 250ZM694 238L706 232 718 238 750 230 748 250 720 256 700 252ZM690 212l30 2 16 8-40 6zM680 268L702 262 700 280 690 288 684 304 678 284ZM650 272L668 266 674 280 672 302 662 314 652 296ZM672 306l14-4 6 10-12 6zM660 148l6-2 2 6-6 2zM630 250l12-8 4 8-10 6zM720 372l14-8 16 8-4 12-16 2zM736 384l10 0-2 8z"],
  [C4, "M564 502L688 502 704 512 722 520 732 526 738 546 748 546 762 538 780 534 792 524 800 514 808 524 802 536 788 546 778 562 768 574 764 590 750 600 740 608 746 626 740 630 732 612 718 608 700 610 684 606 672 618 664 626 656 614 648 606 636 602 616 602 604 598 588 596 572 584 564 566 560 546 556 524 566 512Z"],
  [Y, "M592 598L604 598 616 602 636 602 650 608 658 618 668 628 672 644 680 660 690 664 698 652 714 650 712 662 702 676 690 676 676 672 660 668 644 658 634 640 622 626 612 610 606 610 612 626 620 638 610 632 600 612Z"],
  [Y, "M700 678L708 672 720 672 730 676 728 690 736 702 750 706 756 702 760 710 742 714 728 700 712 690ZM772 656L784 654 798 660 796 664 780 666Z"],
  [Y, "M42 850L60 836 74 830 82 812 92 808 98 798 112 794 134 798 130 810 146 818 156 800 162 792 168 810 178 826 190 840 204 856 208 876 202 900 192 918 174 924 158 918 150 904 144 908 134 900 130 890 112 884 90 888 70 898 56 896 42 902ZM170 934l16 2-2 10-8 4z"],
  [Y, "M288 902L298 908 302 916 314 918 306 930 298 930 300 918ZM292 932L298 942 282 956 270 970 262 966 274 950ZM112 748L126 756 140 752 160 758 180 770 196 782 206 790 190 786 170 784 150 776 132 764 118 762ZM66 680l8-2 8 12-2 16-8-8zM82 708l8 2 2 10-10-4zM42 718L54 716 48 736 42 736ZM70 728l10-4 4 14-8 16-4-10z"],
];
const east: [string, string][] = [
  [Y, "M92 112L108 104 116 92 140 86 142 96 150 84 162 86 164 70 184 68 192 52 208 50 222 40 246 38 262 50 272 60 262 68 276 74 262 84 248 88 262 96 270 88 276 102 284 94 290 104 306 98 318 108 310 124 300 136 286 138 294 156 282 168 288 186 276 196 284 214 276 232 278 244 268 252 280 258 258 270 274 280 254 290 262 300 248 304 270 312 264 328 250 338 232 340 222 356 206 366 196 374 188 388 184 406 180 420 164 416 154 400 148 382 140 366 150 354 136 340 146 336 134 328 146 318 134 312 138 296 132 276 128 256 118 236 104 228 84 226 64 210 84 204 60 188 66 176 84 172 90 164 90 152 78 148 90 136 96 124Z"],
  [Y, "M266 368L276 364 290 362 304 364 310 374 302 386 282 388 270 378Z"],
  [Y, "M388 410L400 398 396 390 412 370 418 352 430 336 448 320 464 310 480 306 498 308 500 318 486 320 470 324 456 334 444 350 438 368 430 384 420 400 416 424 404 436 392 430Z"],
  [C1, "M456 336L466 342 468 360 458 376 450 392 452 412 444 428 436 448 426 454 420 440 418 416 422 400 432 380 440 356Z"],
  [Y, "M466 340L474 322 494 320 496 344 500 364 502 390 492 410 474 420 460 414 458 398 470 382 468 362Z"],
  [C3, "M500 324L514 326 532 336 546 350 540 362 528 364 514 360 522 372 536 374 544 360 556 352 552 340 564 334 566 344 584 338 592 330 614 324 624 318 640 330 656 334 650 318 658 300 656 284 668 272 678 284 674 302 684 314 676 326 686 336 672 356 664 360 678 358 690 346 686 330 692 310 688 294 704 290 698 274 708 278 704 262 720 256 734 254 740 240 760 234 772 234 780 226 792 228 800 214 812 200 822 206 824 214 836 212 850 222 856 238 846 246 832 262 842 272 861 268V492L846 500 830 498 800 484 780 492 760 488 744 498 730 488 720 478 700 474 680 460 660 466 640 464 628 480 630 492 610 490 590 490 572 498 576 512 568 524 574 544 556 540 536 530 532 510 540 498 524 486 510 476 496 460 488 440 492 420 502 400 504 380 498 360 494 340Z"],
  [C3, "M592 306L588 290 596 268 604 250 616 236 632 226 650 216 662 212 660 222 644 232 628 244 618 258 608 278 602 296 610 308 600 312ZM762 124L774 116 784 128 782 146 796 156 792 172 776 166 770 150 758 146ZM794 170L804 166 818 182 802 192ZM562 132l12-4 12 4-10 10-10 0zM592 118l12 2 12-4-4 12-14 4zM610 102l8-4 4 8-6 4zM618 124l12-4 14 4-12 12-10-2zM604 134l10-2 2 8-12 2zM630 108l8 0-2 10zM706 122l6 2-4 6zM574 330l8-4-2 10z"],
  [C4, "M346 436L360 432 354 444 360 456 368 474 374 486 362 492 346 492 354 478 346 474 350 462 342 454ZM332 468l8-6 6 6-4 12-8 2z"],
  [Y, "M392 506L400 494 402 474 412 462 410 452 420 456 418 470 432 474 450 468 470 462 476 450 470 440 472 430 486 426 490 450 500 464 512 478 530 488 540 498 530 512 520 522 508 534 500 528 508 520 492 524 482 534 486 546 474 552 484 562 480 576 470 566 462 552 450 540 440 530 430 526 420 530 428 544 446 556 456 566 442 562 424 550 414 538 404 534 396 540 396 522Z"],
  [C1, "M362 506L378 498 392 506 398 514 396 530 390 540 374 542 364 536 368 520 358 514ZM338 540L362 538 380 544 372 560 360 574 344 576 346 566 342 552Z"],
  [Y, "M488 550L510 544 530 542 554 546 566 554 562 566 540 574 520 572 500 578 488 566ZM338 546l8 2-2 26-8 0zM434 578l12 0-2 6z"],
  [Y, "M572 500L590 488 612 490 628 492 626 476 660 460 682 462 702 474 722 480 732 496 720 510 716 524 704 534 690 532 676 540 660 538 650 528 630 530 616 542 606 532 604 520 588 520 578 514Z"],
  [Y, "M748 502L764 488 784 492 800 486 828 496 861 500 861 640 844 648 826 644 812 650 800 640 786 628 776 614 760 612 740 610 722 604 712 596 702 578 690 566 680 552 690 538 706 532 720 516 730 498Z"],
  [Y, "M540 558L566 554 576 572 590 580 606 576 620 578 616 560 600 548 606 532 620 530 645 540 670 548 684 556 680 575 684 592 676 610 670 630 650 640 636 634 610 632 588 620 580 604 566 592 550 582Z"],
  [Y, "M524 584L548 576 564 592 580 614 596 628 612 634 622 642 608 660 590 670 570 680 550 688 544 672 536 650 528 630 520 610Z"],
  [C4, "M684 578L696 572 708 580 704 592 712 604 724 614 744 622 760 620 764 614 780 614 776 630 764 640 758 634 744 650 732 664 720 680 712 694 700 708 690 690 682 664 678 646 664 640 672 626 680 606Z"],
  [Y, "M710 700l8 8-2 10-6-2zM764 640L776 634 786 644 800 640 812 650 824 646 822 656 834 668 836 684 824 694 816 702 808 690 800 684 792 694 800 710 806 726 798 722 790 700 784 680 776 676 768 656ZM774 708L790 720 806 738 824 758 822 768 806 756 790 736 778 720ZM820 736L836 728 850 716 861 722 861 752 840 760 826 752ZM824 768L845 770 861 776 861 780 840 778ZM861 838L852 850 854 866 861 882Z"],
  [Y, "M338 588L352 576 380 574 408 572 418 580 416 592 444 600 456 604 464 596 490 602 510 604 522 606 520 618 530 640 538 660 548 684 560 694 576 690 598 688 592 706 572 730 556 744 544 758 538 772 542 792 536 810 518 822 516 838 506 856 500 872 486 886 468 896 454 898 444 884 436 862 428 840 418 820 424 800 420 780 416 768 406 754 410 738 404 728 388 722 376 718 360 720 346 726 332 722 318 706 300 694 296 680 304 664 300 650 308 634 322 620 328 602Z"],
  [C2, "M442 864L456 870 460 860 474 862 490 846 502 840 508 852 504 864 494 880 478 896 456 902 446 890Z"],
  [Y, "M580 798L582 816 574 840 568 854 558 856 552 842 556 824 568 812Z"],
  [Y, "M66 700L80 698 104 702 116 708 134 716 152 724 148 740 130 746 110 742 94 740 90 714Z"],
  [C1, "M42 718L52 700 66 692 64 706 90 714 92 728 90 740 72 744 64 758 50 752 38 742ZM24 768L38 764 50 754 60 762 54 778 76 790 74 806 72 824 50 808 38 788 28 776Z"],
  [Y, "M28 744L40 742 50 752 36 766 24 758ZM76 790L98 792 112 810 124 828 136 846 136 860 120 864 112 850 92 842 80 844 72 824Z"],
  [C4, "M62 756L72 744 92 740 94 748 110 742 130 746 148 728 154 738 172 746 190 750 214 766 218 780 204 796 200 820 190 838 170 846 162 862 146 884 136 894 128 884 138 866 134 852 124 836 114 814 100 792 76 786 54 778Z"],
  [C1, "M82 850L98 842 112 850 122 864 134 868 126 886 122 900 126 914 112 924 108 940 98 946 104 960 92 970 86 984 88 996 78 1006 66 996 62 970 66 940 70 910 74 880Z"],
  [Y, "M70 820L80 842 78 860 72 890 68 920 64 950 60 980 66 1000 84 1014 94 1026 76 1030 60 1018 50 1000 48 970 56 940 60 900 66 860ZM122 888l14 4 4 10-12 4-6-6z"],
];
const borders =
  "M70 706L88 742M92 842L104 834 122 832M104 834L106 846 120 862M342 588L366 600 340 624 326 622M366 600L380 576M408 574L412 600 420 620 400 640 384 652 366 628 340 624 344 656 320 660 300 660M384 652L386 668 372 680 356 690 340 680 320 690M386 668L410 680 430 672 436 652 420 620M436 652L466 664 462 600M466 664L478 662 512 660 530 650M478 662L476 690 468 706 452 710 430 704 410 704 402 726M430 672L434 700M412 680L408 704M476 690L500 702 520 700 540 690M468 706L490 726 504 720 520 726 540 700M452 710L440 730 420 736 410 736M440 730L450 750 430 768 416 768M450 750L470 740 500 744 508 752 500 780 510 790M508 752L536 772M416 770L440 778 446 770 462 776 464 800 452 810 424 812 420 820M464 800L484 800 500 794 516 800 518 820M452 810L456 836 470 830 488 810 500 812M456 836L456 860M470 830L490 846M346 690L348 720M366 690L366 718M384 684L384 720M400 690L396 722M322 704L336 694M524 606L524 584M548 580L576 620M548 684L572 672 596 662M544 664L572 660 596 640M402 490L420 500 440 492 436 474M440 492L460 500 466 466M420 500L424 516 400 516M424 516L446 512 460 500 480 510 488 524M446 512L450 530 470 540 482 534M460 500L470 486 500 490 520 486M470 486L476 450M450 530L436 528M470 540L474 552M530 588L510 576M580 570L596 600M620 578L640 590 652 560 640 544M652 560L680 576M640 590L636 634M640 590L668 600 684 590M730 498L756 502 764 522 790 536 812 546 830 528 848 516 846 500M650 528L660 548 680 552M660 536L700 534M776 640L786 664 800 672M812 650L806 668 820 680M800 640L810 660";
const lacework =
  "M324 486L350 484 372 480 388 472 400 462 412 454 424 446 438 430 452 418 470 420M324 486l18 0M222 486L216 500 204 512 192 522 176 534 166 536M228 478l6-10M260 458l10 4M404 648l6 4M412 650l8 6M422 654l6 6M500 428L510 436 518 446 526 450 532 466 544 482 556 490 564 502M506 440l12 12 8 14M522 460l12 8 6 14 10 4M728 650L740 644 752 650 764 650 772 656M750 626l10 8 8 2M762 640l14 8M808 660l4 8M816 670l2 10M700 744l6 2M46 640l10-2M102 610l-10 14-14 10M70 664l8 4-2 10M42 776L58 778 74 782M60 788l10 4M84 782l14-6M96 758l6-4M190 758l14 10M206 768l12 6M304 814l8 4-2 10M316 820l8 6M246 966l-6 4M262 994l2 4M274 1006l2 0M154 622l2 14M210 622l2 10M700 120L720 128 750 134 770 126M742 84l10 6M764 74l8 8M784 82l-4 10M800 80l8 8M718 104l12-2M690 140l20 8 20 2 14 12M690 214l20-10 24 2M700 190l10 14M732 200l18-8M720 296l16-8 8 8M724 282l12-4M738 330l14 12 12-2M756 372l10-4 6 8M710 510l12 6-6 8 14 12M716 506l12 6M768 430l4 6M822 454l8 10M776 526l-12 8M724 348l6 16-10 6M792 350l14 14M778 334l16 10M632 344l-6 10M664 356l-2 8M770 972L776 990 790 1004 800 1020 812 1028M770 984l12 20 12 20M776 976l2 24 10 18M850 412l4-6";
const roughShores =
  "M504 430L514 440 520 452 530 460 536 474 548 488M770 930L768 950 770 974 774 994 784 1008 796 1022M1120 398L1126 380 1140 352 1154 334 1170 322 1186 312 1206 312M420 440L436 426 452 416M812 330L822 346 824 362M854 286l4 14-4 10 6 16M986 256l12 8-10 10 8 12";
const laceEast =
  "M244 570l8-4M256 568l4 8M294 620l10 2M300 600l4-4M350 430l6-8M360 420l4-6M392 400l4 12M402 386l6 8M414 372l6 4M430 340l8 4M446 326l10 2M460 314l10 2M472 310l10 4M474 324l12-12M556 784l4 0M584 770l4 2M600 768l4 4M606 776l8 6M610 830l4 0M638 826l4 2M558 694l20 2M764 684l2 20M768 690l4 16M718 236l2 10M748 206l6 6M780 204l-6 6M694 156l4 4M820 188l6 4M640 510l6-4M666 380l2-24M164 90l4 14M184 70l4 18M200 58l10 12M230 66l20-6M232 96l20-10M116 94l6 16M272 166l12 2M276 178l8 2M276 222l-20-2M260 280l14-4M250 306l18 0M266 366l-2 4M334 452l10 4M330 460l10-2";

type Label = [string, number, number, number, number, number?];
const labels: Label[] = [
  ["2,01,097", -78, 75, 393, 27], ["1,07,514", 539, 688, 441, 27], ["28,16,444", 503, 831, 586, 49, 1], ["8,174", 100, 180, 588, 22, 1],
  ["13,649", 10, 127, 683, 28, 1], ["4,292", -10, 98, 757, 26, 1], ["51", 145, 179, 777, 22], ["9", 304, 321, 831, 22, 1],
  ["5,825", 82, 161, 861, 22], ["21", 271, 306, 954, 22], ["6,849", 667, 745, 693, 22], ["13", 812, 846, 696, 22, 1],
  ["1,17,163", 700, 848, 740, 28, 1], ["5,08,116", 789, 974, 810, 32], ["91,782", 754, 871, 906, 28, 1], ["1", 913, 929, 315, 22],
  ["21", 995, 1028, 387, 22, 1], ["73,695", 1111, 1228, 375, 27], ["319", 1165, 1217, 467, 22], ["2,54,427", 1004, 1163, 496, 29, 1],
  ["28,258", 1178, 1273, 508, 22], ["29,659", 1336, 1432, 511, 22], ["67", 1510, 1544, 527, 22], ["10,790", 1360, 1456, 555, 22],
  ["93,613", 1016, 1132, 568, 28, 1], ["1,391", 1132, 1214, 561, 22], ["10,014", 1228, 1326, 563, 22, 1], ["7,973", 1061, 1140, 624, 22],
  ["52,992", 1153, 1269, 643, 27], ["9,796", 1327, 1406, 597, 22], ["3,258", 1474, 1553, 591, 22], ["4,95,499", 1329, 1515, 661, 31],
  ["1", 1522, 1535, 668, 22], ["53,649", 1548, 1668, 685, 28], ["807", 1375, 1427, 735, 22, 1], ["3,093", 985, 1064, 687, 22, 1],
  ["1", 1022, 1034, 645, 22, 1], ["22,117", 1073, 1170, 713, 22], ["1,560", 1234, 1314, 741, 22], ["2,936", 1152, 1230, 758, 22],
  ["1,734", 1124, 1202, 845, 22], ["3,339", 1249, 1327, 836, 22], ["1,70,537", 1108, 1269, 900, 29, 1], ["2,01,097", 1450, 1603, 393, 27], ["37,292", 1518, 1634, 756, 27],
];

const WorldMap = () => (
  <svg width={513} height={504} viewBox="42 0 1539 1512" fill="none">
    <g transform="translate(0 1050) scale(1.0332 1)">
      <path fill="#ececec" d="M40 78L50 84 80 81 92 79 100 84 106 75 128 75 146 82 164 85 172 98 190 102 202 99 210 106 222 108 230 122 252 127 270 144 266 158 256 166 246 182 242 196 238 200 238 226 246 245 258 240 258 234 288 234 300 239 318 241 326 250 350 255 370 257 379 262 386 254 402 242 402 230 414 229 430 231 436 212 450 199 474 196 492 186 506 181 526 179 530 166 540 173 570 174 580 177 598 178 604 194 612 187 624 192 636 192 630 178 636 170 628 154 632 144 654 143 660 152 684 153 700 162 714 171 730 164 734 152 744 160 756 162 744 146 754 140 748 128 758 118 758 106 768 118 778 112 780 88 794 70 790 58 814 48 798 62 804 76 800 98 803 140 804 160 798 186 820 200 836 214 850 236 872 248 886 242 906 248 914 234 942 210 950 176 964 176 974 158 1002 144 1008 132 1020 127 1044 124 1050 115 1060 121 1104 120 1112 114 1122 118 1144 118 1152 123 1170 118 1178 108 1194 105 1206 114 1216 116 1220 102 1240 94 1262 86 1266 74 1282 73 1290 83 1300 90 1338 93 1344 101 1356 104 1358 116 1366 114 1384 96 1404 78 1420 78 1444 82 1452 64 1456 72 1480 70 1496 76 1512 80 1520 72 1530 78V462H40Z" />
    </g>
    <g stroke="#6b6b66" strokeWidth={3.2} strokeLinejoin="round">
      {west.map(([f, d], i) => <path key={i} d={d} fill={f} />)}
      <path d={lacework} strokeWidth={2.600} />
      <g transform="translate(720 0)">
        <path d="M416 154L432 150 446 166 440 184 446 200 438 216 430 196 420 176ZM448 148L478 142 482 154 462 166 452 158ZM448 184L470 186 460 200Z" fill="#e9e9e9" stroke="none" />
        {east.map(([f, d], i) => <path key={i} d={d} fill={f} />)}
        <path d={borders} strokeWidth={2.600} />
        <path d={laceEast} strokeWidth={3} />
      </g>
      <path d={roughShores} strokeWidth={6} strokeDasharray="7 2" />
    </g>
    <g fontFamily={`"Open Sans"`} fill="#151515">
      {labels.map(([t, a, b, y, cap, bg], i) => (
        <g key={i}>
          {bg && <rect x={a - 4} y={y - cap * 1.45} width={b - a + 9} height={cap * 1.85} fill="#ebebeb" fillOpacity={0.75} style={{ mixBlendMode: "multiply" }} />}
          <text x={a} y={y + 1} fontSize={cap / 0.714} fontWeight={cap > 40 ? 300 : 400} textLength={b - a} lengthAdjust="spacingAndGlyphs">{t}</text>
        </g>
      ))}
    </g>
  </svg>
);

const fields: [string, string, boolean, number][] = [
  ["1 Week % Increase", "#", false, -0.1], ["1 Week Change", "#", false, -0.2], ["Active", "#", false, 0.2], ["Confirmed", "#", false, 0],
  ["Confirmed last week", "#", false, -0.15], ["Deaths", "#", false, 0], ["Deaths / 100 Cases", "#", false, 0.15], ["Deaths / 100 Recovered", "#", false, 0.07],
  ["New cases", "#", false, 0], ["New deaths", "#", false, -0.05], ["New recovered", "#", false, -0.05], ["Recovered", "#", false, 0.08],
  ["Recovered / 100 Cases", "#", false, 0.15], ["country_wise_latest.csv (C...", "#", true, 0.62], ["Latitude (generated)", "g", true, 0.5],
  ["Longitude (generated)", "g", true, 0.5], ["Measure Values", "#", true, 0.45],
];

const menus: [string, number, number][] = [
  ["File", 39, 0], ["Data", 48, 0.1], ["Worksheet", 85, -0.05], ["Dashboard", 89, 0.05], ["Story", 50, 0], ["Analysis", 69, 0],
  ["Map", 46, 0], ["Format", 63, 0], ["Server", 57, 0], ["Window", 71, 0.05], ["Help", 60, 0.1],
];

export default function App() {
  return (
    <Screen>
      <GlobalStyle />
      <TitleBar>
        <AppBadge><TableauMark s={16} mono /></AppBadge>
        <TitleText>Tableau Public - 1CR19EC096_assign4</TitleText>
        <WindowButtons>
          <Svg w={13} h={13}><path d="M0 6.500h13" stroke="#000" /></Svg>
          <Svg w={13} h={13}><path d="M1 3.500h8.500V12H2.500C1.500 12 1 11.500 1 10.500zM3.500 3V2.500c0-1 .5-1.500 1.500-1.500h5c1.300 0 2 .7 2 2v5c0 1-.5 1.500-1.500 1.500H10" stroke="#000" strokeWidth={1.200} /></Svg>
          <Svg w={12} h={13}><path d="M.5 1l11 11M11.500 1l-11 11" stroke="#000" strokeWidth={1.100} /></Svg>
        </WindowButtons>
      </TitleBar>
      <MenuBar>{menus.map(([t, w, s]) => <MenuItem key={t} $w={w} $s={s}>{t}</MenuItem>)}</MenuBar>

      <Toolbar>
        <Tool $l={19} $w={18}><TableauMark s={18} /></Tool>
        <Divider $l={19} />
        <Tool $l={18} $w={16}><Arrow /></Tool>
        <Tool $l={23} $w={16}><Arrow flip /></Tool>
        <Tool $l={20} $w={18}><LoopIcon /></Tool>
        <Caret $l={12} />
        <Tool $l={15} $w={17}><SaveIcon /></Tool>
        <Tool $l={22} $w={16}><DataPlus /></Tool>
        <Divider $l={20} />
        <Tool $l={14} $w={20}><ChartIcon /></Tool>
        <Caret $l={12} />
        <Tool $l={12} $w={19}><CopyIcon /></Tool>
        <Tool $l={18} $w={20}><ChartIcon x /></Tool>
        <Caret $l={12} />
        <Divider $l={11} />
        <Tool $l={16} $w={18}><SwapIcon /></Tool>
        <Tool $l={22} $w={18}><SortIcon /></Tool>
        <Tool $l={21} $w={18}><SortIcon desc /></Tool>
        <Divider $l={19} />
        <Tool $l={19} $w={14}><PenIcon /></Tool>
        <Caret $l={12} />
        <Tool $l={14} $w={14}><ClipIcon /></Tool>
        <Caret $l={14} $c="#b8b8b8" />
        <Tool $l={7} $w={37} $on><LabelIcon w={17} h={15} c="#333" /></Tool>
        <Tool $l={2} $w={37} $on><PinIcon /></Tool>
        <FitSelect><Caret $c="#c8c8c8" $size={4} /></FitSelect>
        <Divider $l={17} />
        <Tool $l={15} $w={21}>
          <Svg w={21} h={15}><path d="M1 1h3.500v3H1zM1 6h3.500v3H1zM1 11h3.500v3H1zM7 .700h13v13.600H7zM10.500 12V8M13.500 12V4M16.500 12V6" stroke="#555" strokeWidth={1.300} /></Svg>
        </Tool>
        <Caret $l={8} />
        <Tool $l={15} $w={19}>
          <Svg w={19} h={17}><path d="M1 2.500h17M3 3v8.500h13V3M9.500 11.500V16M6.500 16h6M9.500 0v2" stroke="#555" strokeWidth={1.300} /></Svg>
        </Tool>
        <Divider $l={19} />
      </Toolbar>

      <Body>
        <DataPane>
          <PaneTabs>
            <DataTab>Data</DataTab>
            <AnalyticsTab>Analytics<Svg w={7} h={10}><path d="M6 .500L1.500 5 6 9.500" stroke="#555" strokeWidth={1.200} /></Svg></AnalyticsTab>
          </PaneTabs>
          <SourceRow>
            <Svg w={17} h={16}>
              <path d="M3.500 11C1.500 10.500 1 10 1 9V3c0-1.200 2-2 4-2s4 .800 4 2M1 3c0 1 2 1.800 4 1.800M4.500 6c0-1 1.800-1.700 4-1.700s4 .700 4 1.700-1.800 1.700-4 1.700-4-.700-4-1.700zM4.500 6v7c0 1 1.500 1.700 3.500 1.700" stroke="#777" />
              <circle cx={12.500} cy={12} r={4} fill="#3f8db3" /><path d="M10.700 12l1.300 1.300 2.300-2.500" stroke="#fff" />
            </Svg>
            country_wise_latest
          </SourceRow>
          <SearchRow>
            <SearchBox>Search<LensIcon /></SearchBox>
            <Svg w={14} h={13}><path d="M1 .700h12L8.300 6.500V12H5.700V6.500z" stroke="#555" strokeWidth={1.100} /></Svg>
            <ThinLine />
            <Svg w={12} h={10}><path d="M0 1h12M0 3.600h12M0 6.300h12M0 9h12" stroke="#444" strokeWidth={1.400} strokeDasharray="3.300 1" /></Svg>
            <Caret $l={9} $size={4} />
          </SearchRow>
          <Tables>Tables</Tables>
          <Field $s={0.2}><FieldIcon><GlobeIcon /></FieldIcon>Country/Region</Field>
          <Field $s={-0.1}><FieldIcon>Abc</FieldIcon>WHO Region</Field>
          <Field $i $s={0.45}><FieldIcon>Abc</FieldIcon>Measure Names</Field>
          <FieldRule />
          {fields.map(([t, k, i, s]) => (
            <Field key={t} $i={i} $s={s}><FieldIcon>{k === "#" ? <HashIcon /> : <GlobeIcon c="#3fa684" />}</FieldIcon>{t}</Field>
          ))}
        </DataPane>

        <Cards>
          <Card $h={70}><CardTitle $s={0.1}>Pages</CardTitle></Card>
          <Card $h={92}><CardTitle $s={0.1}>Filters</CardTitle></Card>
          <Card $h={369}>
            <CardTitle>Marks</CardTitle>
            <MarkSelect>
              <Svg w={13} h={10}><path d="M0 1l4 0 1 1.500-1.500 3L5 7v2.500L3 6 1 3zM6 1.500L9 .500l4 0-.500 3-1.500 2L10 4 9 5.500 8.500 8 7 4zM11 7h2v2h-2z" fill="#666" /></Svg>
              Map
              <MarkArrow><Caret $size={4} /></MarkArrow>
            </MarkSelect>
            <MarkGrid>
              <MarkButton><DotsIcon />Color</MarkButton>
              <MarkButton><SizeIcon />Size</MarkButton>
              <MarkButton><LabelIcon />Label</MarkButton>
              <MarkButton><Svg w={20} h={17}><g transform="translate(0 3)"><circle cx={10} cy={3} r={3} fill="#666" /><g stroke="#777" strokeWidth={1.300}><circle cx={3} cy={10.600} r={2.300} /><circle cx={10} cy={10.600} r={2.300} /><circle cx={17} cy={10.600} r={2.300} /></g></g></Svg>Detail</MarkButton>
              <MarkButton><TooltipIcon />Tooltip</MarkButton>
            </MarkGrid>
            <PillRow><PillIcon><DotsIcon s={14} /></PillIcon><Pill $w={142} $s={0.5}>SUM(Active)</Pill></PillRow>
            <PillRow><PillIcon><SizeIcon s={15} /></PillIcon><Pill $w={142} $s={0.5}>SUM(Active)</Pill></PillRow>
            <PillRow><PillIcon><LabelIcon w={14} h={12} /></PillIcon><Pill $w={142} $s={0.5}>SUM(Active)</Pill></PillRow>
            <PillRow><PillIcon><DetailIcon s={15} /></PillIcon><Pill $w={142} $s={0.5}>SUM(Active)</Pill></PillRow>
            <PillRow><PillIcon><DetailIcon s={15} /></PillIcon><Pill $w={142} $blue $s={0.35}>Country/Region</Pill></PillRow>
          </Card>
        </Cards>

        <Work>
          <Shelf>
            <ShelfName><Svg w={12} h={12}><path d="M2 0v2M6 0v2M10 0v2M2 3.500V12M6 3.500V12M10 3.500V12" stroke="#555" strokeWidth={2} /></Svg>Columns</ShelfName>
            <Pill $w={178} $s={0.1}>Longitude (generate..</Pill>
          </Shelf>
          <Shelf>
            <ShelfName><Svg w={12} h={10}><path d="M0 1h2M0 5h2M0 9h2M3.500 1H12M3.500 5H12M3.500 9H12" stroke="#555" strokeWidth={2} /></Svg>Rows</ShelfName>
            <Pill $w={178} $s={0.15}>Latitude (generated)</Pill>
          </Shelf>
          <Sheet>
            <SheetTitle>Active cases map</SheetTitle>
            <Viz>
              <MapControl $h={28}><MapCell $h={26}><LensIcon s={15} /></MapCell></MapControl>
              <MapControl $h={111}>
                <MapCell $h={26}><Svg w={10} h={10}><path d="M5 0v10M0 5h10" stroke="#555" strokeWidth={2} /></Svg></MapCell>
                <MapCell $h={25}><Svg w={10} h={2}><path d="M0 1h10" stroke="#555" strokeWidth={2} /></Svg></MapCell>
                <MapCell $h={22} $on><PinIcon s={18} /></MapCell>
                <ControlRule />
                <MapCell $h={22}><Svg w={6} h={11}><path d="M0 0l6 5.500L0 11z" fill="#555" /></Svg></MapCell>
              </MapControl>
              <MapCanvas><WorldMap /></MapCanvas>
              <Credit>© 2022 Mapbox © OpenStreetMap</Credit>
            </Viz>
          </Sheet>
        </Work>
      </Body>

      <SheetTabs>
        <SheetTab $w={163} $p={10}><Svg w={9} h={12}><path d="M.700 2.500v7c0 1 1.500 1.800 3.800 1.800s3.800-.800 3.800-1.800v-7C8.300 1.500 6.800.700 4.500.700S.700 1.500.700 2.500zM.700 3.500c0 1 7.600 1 7.600 0" stroke="#666" strokeWidth={1.200} /></Svg>Data Source</SheetTab>
        <SheetTab $w={69} $s={-0.15}>Sheet 1</SheetTab>
        <SheetTab $w={70} $active $p={6}>Sheet 2</SheetTab>
        <SheetTab $w={70} $p={6}>Sheet 3</SheetTab>
        <SheetTab $w={122} $p={8} $s={-0.4}><Svg w={12} h={12}><path d="M.700.700h10.600v10.600H.700zM.700 6h10.600M6 .700v10.600" stroke="#555" strokeWidth={1.200} /></Svg>Dashboard 1</SheetTab>
        <SheetTab $w={32} $p={9}><Svg w={16} h={15}><path d="M7 11.500H.700V.700h10.600V6M3.500 8.500v-2M6 8.500v-5M8.300 8.500V5" stroke="#666" strokeWidth={1.200} /><path d="M11 7v8M7 11h8" stroke="#555" strokeWidth={2} /></Svg></SheetTab>
        <SheetTab $w={32} $p={9}><Svg w={16} h={15}><path d="M7 11.300H.700V.700h10.600V6M.700 6h10M6 .700v10.600" stroke="#666" strokeWidth={1.200} /><path d="M11 7v8M7 11h8" stroke="#555" strokeWidth={2} /></Svg></SheetTab>
        <SheetTab $w={32} $p={9}><Svg w={16} h={15}><path d="M6 2.500L1.500 1v9.500L6 12V2.500L10.500 1v5" stroke="#666" strokeWidth={1.200} /><path d="M11 7v8M7 11h8" stroke="#555" strokeWidth={2} /></Svg></SheetTab>
      </SheetTabs>
      <StatusBar>
        <StatusText $w={82} $s={0.1}>187 marks</StatusText>
        <StatusText $w={125} $s={-0.12}>1 row by 1 column</StatusText>
        <StatusText $w={1292} $s={0.57}>SUM(Active): 6,358,362</StatusText>
        <StatusCell $w={157} /><StatusCell $w={32} /><StatusCell $w={32} /><StatusCell $w={57} />
        <StatusCell $w={71}><Svg w={56} h={8}><path d="M1.500 0v8M54.500 0v8" stroke="#bbb" /><path d="M6 0L2.500 4 6 8zM22 0l-4 4 4 4zM34 0l4 4-4 4zM50 0l3.500 4L50 8z" fill="#bbb" /></Svg></StatusCell>
        <StatusCell $w={71}>
          <Svg w={56} h={12}>
            <path d="M0 1.500h12M0 6h12M0 10.500h12" stroke="#bbb" strokeWidth={3} strokeDasharray="3 1.300" />
            <path d="M22 0h12v7H22zM22 9h3v3h-3zM26.500 9h3v3h-3zM31 9h3v3h-3z" fill="#bbb" /><path d="M45 .500h11v11H45z" fill="#666" />
          </Svg>
        </StatusCell>
      </StatusBar>

      <TaskBar>
        <Svg w={30} h={28}>
          <path d="M0 0h30v28H0z" fill="#0a5fb0" /><path d="M2.500 2.500h12v23h-12z" fill="#f4f4f4" /><path d="M16.500 2.500h11v12h-11z" fill="#66d6ff" /><path d="M16.500 15.500h11V20h-11z" fill="#1ba8ff" /><path d="M16.500 20.500h11v5h-11z" fill="#0a85f0" />
        </Svg>
        <Dock>
          <DockSlot><Svg w={30} h={29}><defs><linearGradient id="win" x1="0" y1="0" x2="1" y2="1"><stop stopColor="#7fe0ff" /><stop offset="1" stopColor="#139dfc" /></linearGradient></defs><path d="M0 0h14.300v14H0zM15.300 0h14.300v14H15.300zM0 15h14.300v14H0zM15.300 15h14.300v14H15.300z" fill="url(#win)" /></Svg></DockSlot>
          <DockSlot><Svg w={30} h={29}><circle cx={17} cy={12} r={10.500} fill="#444" stroke="#eee" strokeWidth={2.500} /><path d="M9.500 19.500L3 27" stroke="#ddd" strokeWidth={3} /></Svg></DockSlot>
          <DockSlot><Svg w={30} h={29}><path d="M0 8h23v20H0z" fill="#666" /><path d="M8 1h22v20H8z" fill="#f0f0f0" /><path d="M8 8h15v13H8z" fill="#bbb" /></Svg></DockSlot>
          <DockSlot><Svg w={30} h={29}><defs><linearGradient id="chat" x1="0" y1="0" x2="1" y2="1"><stop stopColor="#8d6bb5" /><stop offset="1" stopColor="#4b52d0" /></linearGradient></defs><path d="M15 0a14.300 14.300 0 1 1-6 27.500L.500 28 3 22A14.300 14.300 0 0 1 15 0z" fill="url(#chat)" /><path d="M7 9h11v11H7zM19.500 12.500L24 10v9l-4.500-2.500z" fill="#fff" /></Svg></DockSlot>
          <DockSlot><Svg w={30} h={28}><path d="M0 3c0-1.500.500-2 2-2h8l3 4h-6L0 9z" fill="#d99a12" /><path d="M0 8h8l4-3h18v22H0z" fill="#ffcf4a" /><path d="M5 27v-5c0-1.500 1-2.500 2.500-2.500h15c1.500 0 2.500 1 2.500 2.500v5z" fill="#1583d8" /><path d="M8.500 23h13" stroke="#0b4f94" strokeWidth={1.500} /></Svg></DockSlot>
          <DockSlot><Svg w={30} h={30}><defs><linearGradient id="edge" x1="0" y1="0" x2="1" y2=".5"><stop stopColor="#1c8fdd" /><stop offset=".6" stopColor="#2fc2cf" /><stop offset="1" stopColor="#62e36b" /></linearGradient></defs><path d="M15 0c9 0 15 6 15 12.500 0 5-4 8-8.500 8-3 0-5-1-4-3C20 12 16 9 12 9 6 9 1 13 0 18V15A15 15 0 0 1 15 0z" fill="url(#edge)" /><path d="M12 9C5 9-.500 14 0 17c.500 8 8 13 15 13-6-3-7-9-6-13 .500-3 2-5 5-6 1 0 2 .500 3 1.500C16 10 14 9 12 9z" fill="#1b76cf" /><path d="M10 14c-2 8 5 13 12 14 3-1 5-4 6-5-6 2-17 2-14-8 0-2-2-3-4-1z" fill="#12529c" /></Svg></DockSlot>
          <DockSlot><Svg w={29} h={29}><path d="M0 4.500h29V26c0 2-1 3-3 3H3c-2 0-3-1-3-3z" fill="#f0f0f0" /><path d="M8 6V1h13v5" stroke="#23aee8" strokeWidth={2.200} /><path d="M9 11h5.200v5.200H9z" fill="#e8482a" /><path d="M15 11h5.200v5.200H15z" fill="#78b413" /><path d="M9 17h5.200v5.200H9z" fill="#1aa0e8" /><path d="M15 17h5.200v5.200H15z" fill="#f6b60b" /></Svg></DockSlot>
          <DockSlot><Badged $m="-6px 0 0 1px"><Svg w={38} h={37}><circle cx={18} cy={22} r={14} fill="#0d95d6" stroke="#fff" strokeWidth={2} /><path d="M13.500 18.500c0-6 10-6 9.500 0 0 3.500-5 3.500-5 7.500M18 28v4" stroke="#fff" strokeWidth={3.400} /><circle cx={29} cy={10.500} r={10} fill="#ffc20e" /></Svg></Badged></DockSlot>
          <DockSlot><Svg w={30} h={30}><circle cx={15} cy={15} r={14.800} fill="#fff" /><path d="M7 25V13.500L12 7h6l5 6.500V25M11 25V13.500l4-4 4 4V25l-4-4z" stroke="#222" strokeWidth={2} /></Svg></DockSlot>
          <DockSlot>
            <Badged $m="-6px 0 0 8px"><Svg w={36} h={36}>
              <circle cx={14} cy={21} r={14} fill="#35a853" />
              <path d="M14 21l6 3.500L14 35a14 14 0 0 0 12.100-21H14z" fill="#fcc31e" />
              <path d="M1.900 14A14 14 0 0 1 26.100 14H14L8 24.500z" fill="#e33b2e" />
              <circle cx={14} cy={21} r={6.800} fill="#fff" /><circle cx={14} cy={21} r={5.200} fill="#2f7de8" /><circle cx={26} cy={10} r={9.500} fill="#111a1e" /><path d="M24 3c4-2 6 2 2 4s-5 3 0 4 2 6-4 6M30 5c2 2 0 4-2 4" stroke="#5bc3d6" strokeWidth={2} />
            </Svg></Badged>
            <RunMark $w={8} $c="#9a9a9a" />
          </DockSlot>
          <DockSlot $on><Svg w={28} h={28}><path d="M0 0h28v28H0z" fill="#f4f2ee" /><g transform="translate(2 2)"><TableauMark s={24} mono /></g></Svg><RunMark $w={20} $c="#4cc2ff" /></DockSlot>
        </Dock>
        <Tray>
          <Svg w={16} h={9}><path d="M.5 8.500L8 1l7.500 7.500" stroke="#fff" strokeWidth={1.300} /></Svg>
          <Svg w={44} h={14}><path d="M17 13c-6 0-6-6-1-7C17 0 26 0 27 4c5 0 6 9 0 9z" fill="#bbb" /><path d="M15 13c-4-1-3-4 0-5l9-2 7 3c1.500 2 0 4-2 4z" fill="#fff" /></Svg>
          <TwoLines $a="center" $w={40} $m="0 17px 0 1px" $s={-0.3}>ENG<br />IN</TwoLines>
          <Svg w={20} h={16}><path d="M1 6a13 13 0 0 1 18 0M3.800 9a9 9 0 0 1 12.400 0M6.500 12a5 5 0 0 1 7 0" stroke="#fff" strokeWidth={1.500} /><circle cx={10} cy={13.800} r={1.800} fill="#fff" /></Svg>
          <Svg w={40} h={18}><path d="M10.700 6h3.500L18.500 2v14l-4.300-4h-3.500z" stroke="#fff" strokeWidth={1.300} /><path d="M21.500 6c1.500 2 1.500 4 0 6" stroke="#ccc" strokeWidth={1.300} /><path d="M24.500 3.500c3 3.500 3 7.500 0 11M27 1.500c4 4.500 4 10.500 0 15" stroke="#666" strokeWidth={1.300} /></Svg>
          <Svg w={20} h={14}><rect x={0.800} y={1} width={16.800} height={12} rx={3} stroke="#fff" strokeWidth={1.300} /><path d="M3 3h11.500v8H3zM18.500 5H20v4h-1.500z" fill="#fff" /></Svg>
          <TwoLines $a="right" $w={86} $m="0 10px 0 10px" $s={0.1}>11:37<br />02-09-2022</TwoLines>
          <Bubble>1</Bubble>
        </Tray>
      </TaskBar>

      <ShowMe>
        <ShowTab>
          <Svg w={15} h={15}><path d="M0 0h11v3H0z" fill="#86709c" /><path d="M0 4h14v3H0z" fill="#7fa6cc" /><path d="M0 8h5v3H0z" fill="#f5a878" /><path d="M0 12h8v3H0z" fill="#fa6e80" /></Svg>
          Show Me
        </ShowTab>
        <ShowPanel>
          <Thumbs>
            {thumbs.map((t, i) => <Thumb key={i} $on={i === 3}><Svg w={69} h={52} box="0 0 207 156">{t}</Svg></Thumb>)}
          </Thumbs>
          <Hint $t={19}><span>For <b>symbol maps</b> try</span></Hint>
          <Hint $t={7}><HintLead $w={40}>1 geo</HintLead><GlobeIcon c="#777" /><Pill $w={105} $blue $s={0.05}>Dimension</Pill></Hint>
          <Hint $t={10}><HintLead $w={67}>0 or more</HintLead><Pill $w={113} $blue $s={0.05}>Dimensions</Pill></Hint>
          <Hint $t={10}><HintLead $w={39}>0 to 2</HintLead><Pill $w={98} $s={0.05}>Measures</Pill></Hint>
          <HintNote>May use spatial measure in<br />place of geo dimension</HintNote>
        </ShowPanel>
      </ShowMe>
    </Screen>
  );
}
